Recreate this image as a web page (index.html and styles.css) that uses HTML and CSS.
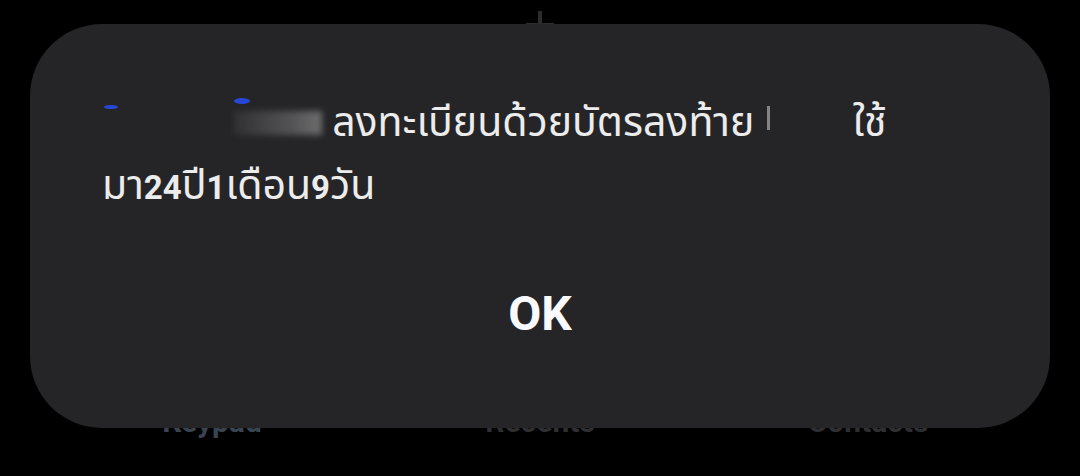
FILE: index.html
```html
<!DOCTYPE html>
<html lang="th">
<head>
    <meta charset="UTF-8">
    <meta name="viewport" content="width=device-width, initial-scale=1.0">
    <title>Phone</title>
    <link rel="stylesheet" href="styles.css">
</head>
<body>
    <div class="screen">
        <div class="top-bar">
            <svg class="add-icon" viewBox="0 0 30 30" width="30" height="30">
                <path d="M15 1v28M1 15h28" stroke="#2c2c2c" stroke-width="4" fill="none"/>
            </svg>
        </div>

        <div class="tabs">
            <span class="tab active">Keypad</span>
            <span class="tab">Recents</span>
            <span class="tab">Contacts</span>
        </div>
    </div>

    <div class="dialog">
        <p class="message">
            <span class="redact redact-name"></span> ลงทะเบียนด้วยบัตรลงท้าย <span class="redact redact-card"></span> ใช้<br>
            มา<span class="num">24</span>ปี<span class="num">1</span>เดือน<span class="num">9</span>วัน
        </p>
        <div class="actions">
            <button class="ok-btn">OK</button>
        </div>
    </div>
</body>
</html>
```

FILE: styles.css
```css
html, body {
    margin: 0;
    padding: 0;
}
body {
    background: #000;
    width: 1080px;
    height: 476px;
    overflow: hidden;
    position: relative;
    font-family: Roboto, "Noto Sans Thai", "Noto Sans", sans-serif;
}
.screen {
    height: 476px;
    display: flex;
    flex-direction: column;
    justify-content: space-between;
}
.top-bar {
    display: flex;
    justify-content: center;
    padding-top: 10px;
}
.add-icon {
    display: block;
}
.tabs {
    display: grid;
    grid-template-columns: repeat(3, 1fr);
    padding: 0 48px 36px;
}
.tab {
    text-align: center;
    font-size: 30px;
    font-weight: 700;
    color: #2e2f31;
    line-height: 36px;
}
.tab.active {
    color: #3a4350;
}

/* dialog over the dialer */
.dialog {
    position: absolute;
    left: 30px;
    top: 24px;
    width: 1020px;
    height: 404px;
    box-sizing: border-box;
    background: #252527;
    border-radius: 72px;
    padding: 67px 72px 0;
    display: flex;
    flex-direction: column;
}
.message {
    margin: 0;
    color: #ececec;
    font-size: 41px;
    line-height: 63px;
}
.num {
    font-size: 33px;
    font-weight: 700;
}
.redact {
    display: inline-block;
    position: relative;
    height: 30px;
    vertical-align: -4px;
}
.redact-name {
    width: 220px;
}
/* blue specks left by the blur */
.redact-name::before {
    content: "";
    position: absolute;
    left: 2px;
    top: -5px;
    width: 14px;
    height: 4px;
    border-radius: 50%;
    background: #2748d6;
    box-shadow: 131px -6px 0 1px #2748d6;
}
.redact-name::after {
    content: "";
    position: absolute;
    left: 132px;
    top: 1px;
    width: 88px;
    height: 24px;
    background: linear-gradient(90deg, rgba(190, 190, 190, 0.08), rgba(200, 200, 200, 0.3) 70%, rgba(220, 220, 220, 0.4));
    filter: blur(3px);
}
.redact-card {
    width: 78px;
}
.redact-card::before {
    content: "";
    position: absolute;
    left: 2px;
    top: -4px;
    width: 3px;
    height: 24px;
    background: rgba(230, 230, 230, 0.5);
}
.actions {
    flex: 1;
    display: flex;
    justify-content: center;
    align-items: flex-start;
    padding-top: 67px;
}
.ok-btn {
    background: none;
    border: none;
    padding: 0 24px;
    color: #fafafe;
    font-family: Roboto, sans-serif;
    font-size: 48px;
    font-weight: 700;
    line-height: 56px;
    cursor: pointer;
}
```
